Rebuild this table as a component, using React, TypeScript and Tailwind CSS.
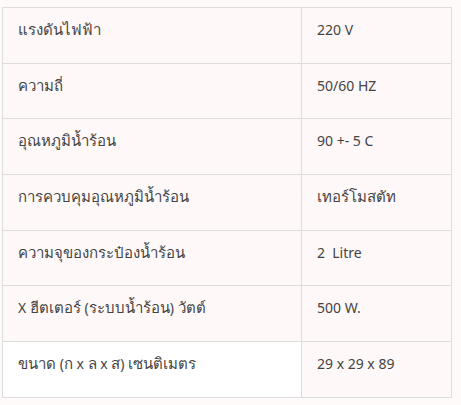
const specs = [
  ['แรงดันไฟฟ้า', '220 V'],
  ['ความถี่', '50/60 HZ'],
  ['อุณหภูมิน้ำร้อน', '90 +- 5 C'],
  ['การควบคุมอุณหภูมิน้ำร้อน', 'เทอร์โมสตัท'],
  ['ความจุของกระป๋องน้ำร้อน', '2  Litre'],
  ['X ฮีตเตอร์ (ระบบน้ำร้อน) วัตต์', '500 W.'],
  ['ขนาด (ก x ล x ส) เซนติเมตร', '29 x 29 x 89'],
];

// Thai glyphs render a touch larger than the Latin ones in the original
function Mixed({ text }: { text: string }) {
  return (
    <>
      {text.split(/([\u0E00-\u0E7F]+)/).map((part, i) =>
        /[\u0E00-\u0E7F]/.test(part) ? (
          <span key={i} className="text-[15px]">
            {part}
          </span>
        ) : (
          <span key={i}>{part}</span>
        )
      )}
    </>
  );
}

export default function App() {
  return (
    <div className="min-h-[405px] w-[461px] bg-[#fefafa] pl-[2px] pt-[7px] font-['Noto_Sans','Open_Sans',sans-serif] text-[14px] text-[#444]">
      <table className="w-[450px] border-collapse">
        <tbody>
          {specs.map(([label, value], i) => (
            <tr key={i} className="h-[55.7px]">
              <td
                className={`w-[299px] border border-[#dddddd] px-[15px] pt-[9px] pb-[20px] align-top leading-[25px] ${
                  i === specs.length - 1 ? 'bg-white' : 'bg-[#fef8f8]'
                }`}
              >
                <Mixed text={label} />
              </td>
              <td className="border border-[#dddddd] bg-[#fef8f8] px-[15px] pt-[9px] pb-[20px] align-top leading-[25px] whitespace-pre">
                <Mixed text={value} />
              </td>
            </tr>
          ))}
        </tbody>
      </table>
    </div>
  );
}
